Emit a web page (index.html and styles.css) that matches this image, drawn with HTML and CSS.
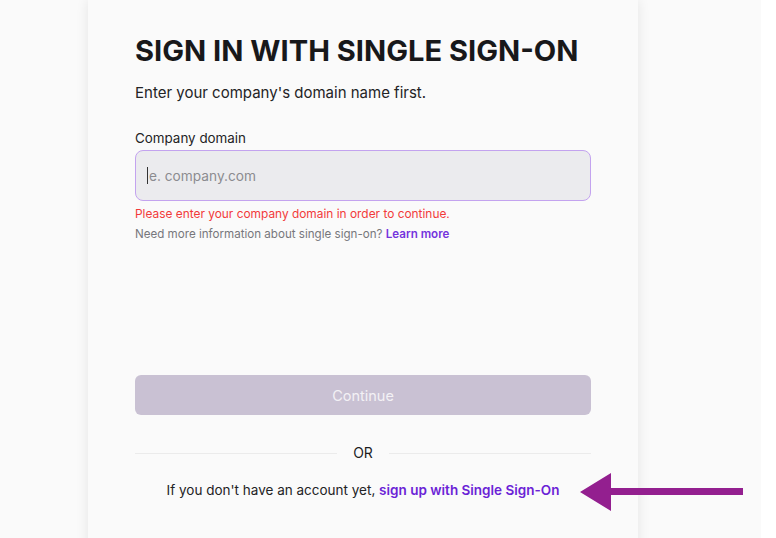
FILE: index.html
```html
<!DOCTYPE html>
<html lang="en">
<head>
<meta charset="utf-8">
<title>Sign in with Single Sign-On</title>
<link rel="stylesheet" href="styles.css">
</head>
<body>
<div class="page">
  <main class="card">
    <h1 class="title">SIGN IN WITH SINGLE SIGN-ON</h1>
    <p class="lead">Enter your company's domain name first.</p>
    <label class="label" for="domain">Company domain</label>
    <div class="input"><span class="caret"></span><span class="placeholder">e. company.com</span></div>
    <p class="error">Please enter your company domain in order to continue.</p>
    <p class="help">Need more information about single sign-on? <a class="help-link" href="#">Learn more</a></p>
    <div class="spacer"></div>
    <button class="btn" type="button">Continue</button>
    <div class="divider"><span class="line"></span><span class="or">OR</span><span class="line"></span></div>
    <p class="signup">If you don't have an account yet, <a class="signup-link" href="#">sign up with Single Sign-On</a></p>
  </main>
  <svg class="arrow" width="166" height="40" viewBox="0 0 166 40" aria-hidden="true">
    <polygon points="0,19 31,0 31,15 163,15 163,22 31,22 31,38" fill="#931f8f"/>
  </svg>
</div>
</body>
</html>
```
FILE: styles.css
```css
html, body {
  margin: 0;
  padding: 0;
  background: #ffffff;
  height: 100%;
  overflow: hidden;
}
body {
  font-family: Inter, "Noto Sans", "Liberation Sans", sans-serif;
  color: #1d1d1f;
}
.page {
  position: relative;
  width: 761px;
  height: 538px;
  background: #fafafa;
  display: flex;
  overflow: hidden;
}
.card {
  margin-left: 88px;
  width: 550px;
  box-sizing: border-box;
  padding: 33px 47px 0 47px;
  background: #fafafa;
  box-shadow: 0 0 12px rgba(0, 0, 0, 0.09);
  display: flex;
  flex-direction: column;
  height: 560px;
}
.title {
  margin: 0;
  font-size: 29.1px;
  line-height: 36px;
  font-weight: 700;
  color: #18181a;
}
.lead {
  margin: 14px 0 0;
  font-size: 15px;
  line-height: 20px;
  color: #232325;
}
.label {
  margin-top: 25px;
  font-size: 13.4px;
  line-height: 20px;
  color: #232325;
}
.input {
  margin-top: 2px;
  height: 51px;
  box-sizing: border-box;
  border: 1.5px solid #c3a3ef;
  border-radius: 8px;
  background: #ebebee;
  display: flex;
  align-items: center;
  padding-left: 11px;
}
.caret {
  width: 1px;
  height: 17px;
  background: #333;
  margin-right: 1px;
}
.placeholder {
  font-size: 13.7px;
  color: #8b8b90;
}
.error {
  margin: 4px 0 0;
  font-size: 11.9px;
  line-height: 18px;
  color: #f23a3a;
}
.help {
  margin: 3px 0 0;
  font-size: 11.6px;
  line-height: 16px;
  color: #77777c;
}
.help-link {
  color: #7433dd;
  font-weight: 600;
  text-decoration: none;
}
.spacer {
  height: 133px;
}
.btn {
  height: 40px;
  border: 0;
  border-radius: 6px;
  background: #c9c1d3;
  color: #f3f1f5;
  font-family: inherit;
  font-size: 14.5px;
  padding: 0;
}
.divider {
  margin-top: 28px;
  display: flex;
  align-items: center;
  gap: 16px;
}
.line {
  flex: 1;
  height: 1px;
  background: #ebebeb;
}
.or {
  font-size: 14px;
  line-height: 20px;
  color: #1d1d1f;
}
.signup {
  margin: 17px 0 0;
  text-align: center;
  font-size: 13.5px;
  line-height: 20px;
  color: #232325;
}
.signup-link {
  color: #6a22d6;
  font-weight: 600;
  text-decoration: none;
}
.arrow {
  position: absolute;
  left: 580px;
  top: 473px;
}
```
